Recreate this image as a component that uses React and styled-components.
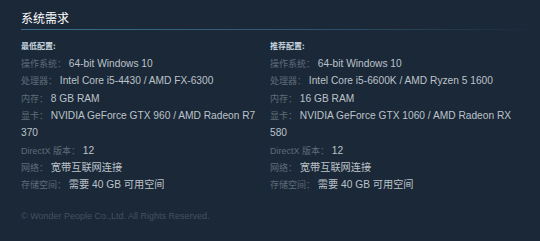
import React from "react";
import styled, { createGlobalStyle } from "styled-components";

const GlobalStyle = createGlobalStyle`
  html, body {
    margin: 0;
    padding: 0;
    background: #1b2838;
  }
  body {
    font-family: "Liberation Sans", Arial, "Noto Sans CJK SC", sans-serif;
  }
`;

const Page = styled.div`
  width: 540px;
  height: 241px;
  box-sizing: border-box;
  padding: 11px 0 0 21px;
  background: #1b2838;
  overflow: hidden;
`;

const Heading = styled.h2`
  margin: 0;
  padding-bottom: 4px;
  font-family: "Noto Sans CJK SC", sans-serif;
  font-size: 12px;
  font-weight: 400;
  line-height: 14px;
  color: #ffffff;
  border-bottom: 1px solid;
  border-image: linear-gradient(to right, #3b6e8c 0%, #2f5570 55%, rgba(59, 110, 140, 0) 100%) 1;
`;

const Columns = styled.div`
  display: grid;
  grid-template-columns: 244px 244px;
  column-gap: 5px;
  margin-top: 10px;
`;

const Column = styled.div`
  display: flex;
  flex-direction: column;
`;

const Title = styled.div`
  font-family: "Noto Sans CJK SC", sans-serif;
  font-size: 8px;
  font-weight: 700;
  line-height: 12px;
  color: #c6d4df;
  margin-bottom: 3px;
`;

const List = styled.ul`
  margin: 0;
  padding: 0;
  list-style: none;
`;

const Row = styled.li`
  font-size: 10.2px;
  line-height: 17.33px;
  color: #bcc3c9;
`;

const Label = styled.span`
  font-family: "Liberation Sans", "Noto Sans CJK SC", sans-serif;
  font-size: 9px;
  line-height: 1;
  color: #5f6c78;
`;

const Value = styled.span`
  font-family: "Liberation Sans", "Noto Sans CJK SC", sans-serif;
  line-height: 1;
`;

const Copyright = styled.div`
  margin-top: 16px;
  font-size: 9px;
  line-height: 12px;
  color: #44525e;
`;

const minimum = [
  ["操作系统：", "64-bit Windows 10"],
  ["处理器：", "Intel Core i5-4430 / AMD FX-6300"],
  ["内存：", "8 GB RAM"],
  ["显卡：", "NVIDIA GeForce GTX 960 / AMD Radeon R7 370"],
  ["DirectX 版本：", "12"],
  ["网络：", "宽带互联网连接"],
  ["存储空间：", "需要 40 GB 可用空间"],
];

const recommended = [
  ["操作系统：", "64-bit Windows 10"],
  ["处理器：", "Intel Core i5-6600K / AMD Ryzen 5 1600"],
  ["内存：", "16 GB RAM"],
  ["显卡：", "NVIDIA GeForce GTX 1060 / AMD Radeon RX 580"],
  ["DirectX 版本：", "12"],
  ["网络：", "宽带互联网连接"],
  ["存储空间：", "需要 40 GB 可用空间"],
];

function ReqColumn({ title, rows }) {
  return (
    <Column>
      <Title>{title}</Title>
      <List>
        {rows.map(([label, value]) => (
          <Row key={label}>
            <Label>{label}</Label> <Value>{value}</Value>
          </Row>
        ))}
      </List>
    </Column>
  );
}

export default function App() {
  return (
    <Page>
      <GlobalStyle />
      <Heading>系统需求</Heading>
      <Columns>
        <ReqColumn title="最低配置:" rows={minimum} />
        <ReqColumn title="推荐配置:" rows={recommended} />
      </Columns>
      <Copyright>© Wonder People Co.,Ltd. All Rights Reserved.</Copyright>
    </Page>
  );
}
